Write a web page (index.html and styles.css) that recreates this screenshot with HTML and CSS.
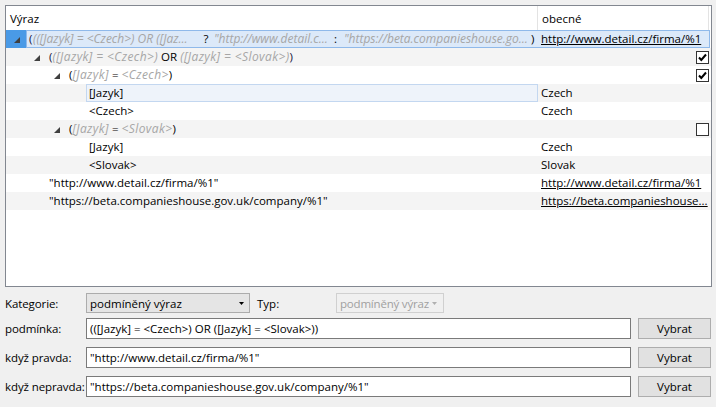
FILE: index.html
```html
<!DOCTYPE html>
<html>
<head>
<meta charset="utf-8">
<link rel="stylesheet" href="styles.css">
</head>
<body>
<div class="tree">
  <div class="hdr">
    <div class="hc1">Výraz</div>
    <div class="hc2">obecné</div>
  </div>

  <div class="row sel">
    <div class="ind"><svg class="exp" width="6" height="6" viewBox="0 0 6 6"><polygon points="6,0 6,6 0,6" fill="#404040"/></svg></div>
    <div class="selbox">
      <div class="sc1">
        <span class="br">(</span><span class="g seg s1">(([Jazyk] = &lt;Czech&gt;) OR ([Jaz...</span><span class="op">?</span><span class="g seg s2">"http://www.detail.c...</span><span class="op2">:</span><span class="g seg s3">"https://beta.companieshouse.go...</span><span class="cl">)</span>
      </div>
      <div class="sc2"><span class="link">http://www.detail.cz/firma/%1</span></div>
    </div>
  </div>

  <div class="row alt">
    <div class="c1"><span class="ind1"></span><span class="slot"><svg class="exp" width="6" height="6" viewBox="0 0 6 6"><polygon points="6,0 6,6 0,6" fill="#404040"/></svg></span><span class="txt"><span class="br">(</span><span class="g">([Jazyk] = &lt;Czech&gt;)</span> OR <span class="g">([Jazyk] = &lt;Slovak&gt;)</span><span class="br">)</span></span></div>
    <div class="c2"><span class="chk on"><svg width="11" height="11" viewBox="0 0 11 11"><path d="M2 5.5 L4.3 8 L9 2.5" fill="none" stroke="#000" stroke-width="2"/></svg></span></div>
  </div>

  <div class="row">
    <div class="c1"><span class="ind2"></span><span class="slot"><svg class="exp" width="6" height="6" viewBox="0 0 6 6"><polygon points="6,0 6,6 0,6" fill="#404040"/></svg></span><span class="txt">(<span class="g">[Jazyk]</span> = <span class="g">&lt;Czech&gt;</span>)</span></div>
    <div class="c2"><span class="chk on"><svg width="11" height="11" viewBox="0 0 11 11"><path d="M2 5.5 L4.3 8 L9 2.5" fill="none" stroke="#000" stroke-width="2"/></svg></span></div>
  </div>

  <div class="row alt">
    <div class="c1"><span class="ind3"></span><span class="slot"></span><span class="focus">[Jazyk]</span></div>
    <div class="c2"><span class="val">Czech</span></div>
  </div>

  <div class="row">
    <div class="c1"><span class="ind3"></span><span class="slot"></span><span class="txt">&lt;Czech&gt;</span></div>
    <div class="c2"><span class="val">Czech</span></div>
  </div>

  <div class="row alt">
    <div class="c1"><span class="ind2"></span><span class="slot"><svg class="exp" width="6" height="6" viewBox="0 0 6 6"><polygon points="6,0 6,6 0,6" fill="#404040"/></svg></span><span class="txt">(<span class="g">[Jazyk]</span> = <span class="g">&lt;Slovak&gt;</span>)</span></div>
    <div class="c2"><span class="chk"></span></div>
  </div>

  <div class="row">
    <div class="c1"><span class="ind3"></span><span class="slot"></span><span class="txt">[Jazyk]</span></div>
    <div class="c2"><span class="val">Czech</span></div>
  </div>

  <div class="row alt">
    <div class="c1"><span class="ind3"></span><span class="slot"></span><span class="txt">&lt;Slovak&gt;</span></div>
    <div class="c2"><span class="val">Slovak</span></div>
  </div>

  <div class="row">
    <div class="c1"><span class="ind1"></span><span class="slot"></span><span class="txt">"http://www.detail.cz/firma/%1"</span></div>
    <div class="c2"><span class="val link">http://www.detail.cz/firma/%1</span></div>
  </div>

  <div class="row alt">
    <div class="c1"><span class="ind1"></span><span class="slot"></span><span class="txt">"https://beta.companieshouse.gov.uk/company/%1"</span></div>
    <div class="c2"><span class="val link">https://beta.companieshouse...</span></div>
  </div>
</div>

<div class="form">
  <div class="frow r1">
    <span class="lbl">Kategorie:</span>
    <div class="dd"><span>podmíněný výraz</span><svg class="arr" width="5" height="3" viewBox="0 0 5 3"><polygon points="0,0 5,0 2.5,3" fill="#000"/></svg></div>
    <span class="typ">Typ:</span>
    <div class="dd dis"><span>podmíněný výraz</span><svg class="arr" width="5" height="3" viewBox="0 0 5 3"><polygon points="0,0 5,0 2.5,3" fill="#b0b0b0"/></svg></div>
  </div>
  <div class="frow r2">
    <span class="lbl">podmínka:</span>
    <div class="tb">(([Jazyk] = &lt;Czech&gt;) OR ([Jazyk] = &lt;Slovak&gt;))</div>
    <div class="btn">Vybrat</div>
  </div>
  <div class="frow r3">
    <span class="lbl">když pravda:</span>
    <div class="tb">"http://www.detail.cz/firma/%1"</div>
    <div class="btn">Vybrat</div>
  </div>
  <div class="frow r3">
    <span class="lbl">když nepravda:</span>
    <div class="tb">"https://beta.companieshouse.gov.uk/company/%1"</div>
    <div class="btn">Vybrat</div>
  </div>
</div>
</body>
</html>
```

FILE: styles.css
```css
* { box-sizing: border-box; }
html, body {
  margin: 0;
  padding: 0;
}
body {
  width: 716px;
  height: 407px;
  overflow: hidden;
  background: #f0f0f0;
  font-family: "Open Sans", "Noto Sans", sans-serif;
  font-size: 11.5px;
  color: #000;
}

.tree {
  margin: 5px 0 0 5px;
  width: 707px;
  height: 282px;
  border: 1px solid #828790;
  background: #fff;
  overflow: hidden;
}

.hdr {
  display: flex;
  height: 24px;
  background: #fff;
}
.hc1, .hc2 {
  line-height: 25px;
  padding-left: 4px;
  border-right: 1px solid #e3e3e3;
  white-space: nowrap;
}
.hc1 { width: 532px; }
.hc2 { width: 171px; }

.row {
  display: flex;
  height: 18px;
  line-height: 18px;
  white-space: nowrap;
}
.row.alt { background: #f4f4f4; }

.c1 {
  width: 532px;
  display: flex;
  align-items: center;
  height: 18px;
}
.c2 {
  flex: 1;
  display: flex;
  align-items: center;
  height: 18px;
  padding-right: 2px;
}
.ind1 { width: 20px; flex: none; }
.ind2 { width: 40px; flex: none; }
.ind3 { width: 60px; flex: none; }
.slot {
  width: 20px;
  flex: none;
  height: 18px;
  display: flex;
  align-items: center;
}
.exp { margin-left: 8px; margin-top: 2px; display: block; }
.txt { padding-left: 3px; }
.g {
  color: #a6a6a6;
  font-style: italic;
  font-size: 12px;
  letter-spacing: 0.4px;
}
.br { color: #14143c; }

.focus {
  flex: 1;
  height: 18px;
  line-height: 16px;
  padding-left: 2px;
  border: 1px solid #c3d7f0;
  background: #eef3fa;
}

.val { padding-left: 3px; }
.link { text-decoration: underline; }

.chk {
  margin-left: auto;
  width: 13px;
  height: 13px;
  border: 1px solid #333;
  background: #fff;
  display: flex;
  align-items: center;
  justify-content: center;
}
.chk svg { display: block; }

/* selected row */
.row.sel { height: 18px; }
.sel .ind {
  width: 20px;
  flex: none;
  background: #4a9ae6;
  display: flex;
  align-items: center;
}
.selbox {
  flex: 1;
  display: flex;
  border: 1px solid #8fb9ea;
  background: #dce9f9;
  height: 18px;
  line-height: 16px;
  margin-right: 1px;
}
.sc1 {
  width: 511px;
  padding-left: 2px;
  display: flex;
  overflow: hidden;
}
.sc1 .br { width: 4px; flex: none; }
.seg {
  display: inline-block;
  overflow: hidden;
  white-space: nowrap;
  flex: none;
  letter-spacing: 0;
}
.s1 { width: 165px; }
.s2 { width: 113px; }
.s3 { width: 184px; }
.op { width: 16px; text-align: center; flex: none; }
.op2 { width: 17px; text-align: center; flex: none; }
.cl { padding-left: 3px; flex: none; }
.sc2 {
  flex: 1;
  padding-left: 3px;
  white-space: nowrap;
  overflow: hidden;
}

/* form */
.form {
  padding: 6px 0 0 5px;
  display: flex;
  flex-direction: column;
}
.frow {
  display: flex;
  align-items: center;
}
.r2 { margin-top: 5px; }
.r3 { margin-top: 8px; }
.lbl { width: 81px; flex: none; white-space: nowrap; letter-spacing: -0.1px; }

.dd {
  width: 164px;
  height: 20px;
  border: 1px solid #acacac;
  background: #e5e5e5;
  display: flex;
  align-items: center;
  padding: 0 5px 0 3px;
  white-space: nowrap;
}
.dd span { overflow: hidden; }
.dd .arr { margin-left: auto; display: block; flex: none; }
.dd.dis {
  width: 108px;
  border-color: #d0d0d0;
  background: #f0f0f0;
  color: #a0a0a0;
  padding-right: 6px;
  letter-spacing: -0.2px;
}
.typ { width: 86px; padding-left: 7px; }

.tb {
  width: 545px;
  height: 21px;
  border: 1px solid #7a7a7a;
  background: #fff;
  padding-left: 3px;
  line-height: 19px;
  white-space: nowrap;
}
.btn {
  margin-left: 7px;
  width: 73px;
  height: 21px;
  border: 1px solid #adadad;
  background: #e1e1e1;
  text-align: center;
  line-height: 19px;
}
```
